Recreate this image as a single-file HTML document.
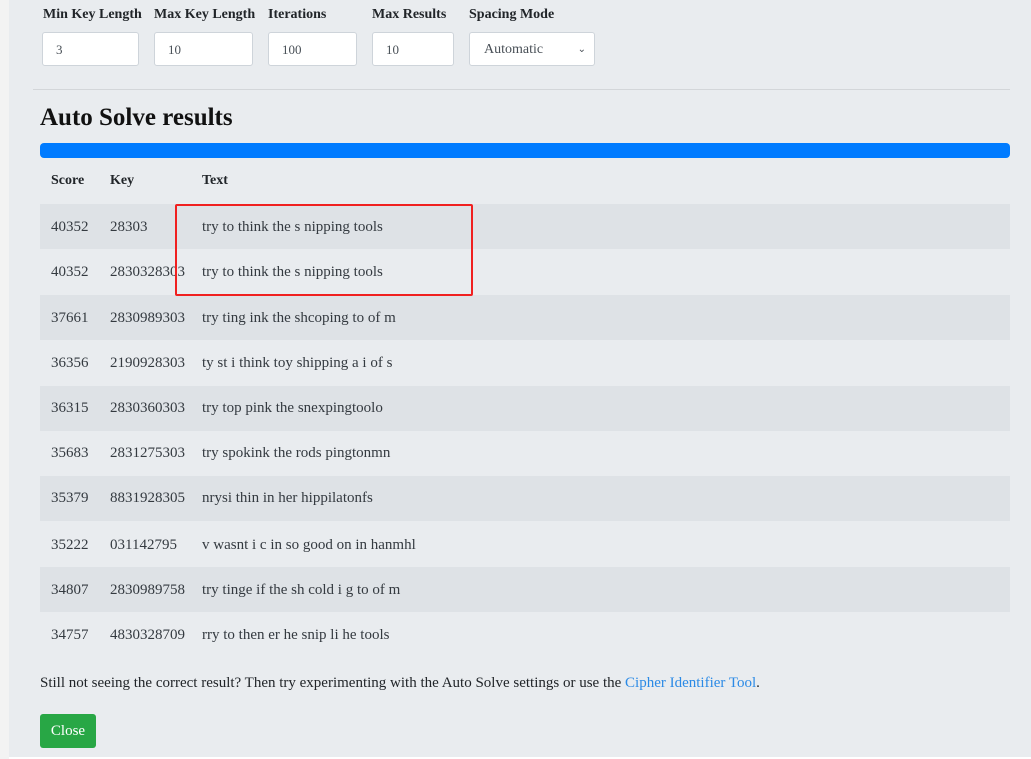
<!DOCTYPE html>
<html><head><style>
body{margin:0;width:1031px;height:759px;background:#fff;position:relative;overflow:hidden;font-family:"Liberation Serif",serif;color:#212529}
.a{position:absolute;white-space:nowrap}
#bg{position:absolute;left:0;top:0;width:1031px;height:757px;background:#e9ecef}
#strip{position:absolute;left:0;top:0;width:9px;height:759px;background:#f3f3f3}
.lbl{font-weight:bold;font-size:14px;top:7px}
.in{position:absolute;top:32px;height:34px;background:#fff;border:1px solid #ced4da;border-radius:3px;font-size:13px;color:#495057;line-height:34px;padding-left:13px;box-sizing:border-box}
.row{position:absolute;left:40px;width:970px;height:45px}
.s{background:#dee2e6}
.c{position:absolute;font-size:15px;color:#343a40;white-space:nowrap}
</style></head><body>
<div id="bg"></div><div id="strip"></div>
<div class="a lbl" style="left:43px">Min Key Length</div>
<div class="a lbl" style="left:154px">Max Key Length</div>
<div class="a lbl" style="left:268px">Iterations</div>
<div class="a lbl" style="left:372px">Max Results</div>
<div class="a lbl" style="left:469px">Spacing Mode</div>
<div class="in" style="left:42px;width:97px">3</div>
<div class="in" style="left:154px;width:99px">10</div>
<div class="in" style="left:268px;width:89px">100</div>
<div class="in" style="left:372px;width:82px">10</div>
<div class="in" style="left:469px;width:126px;font-size:14px;padding-left:14px">Automatic<span style="position:absolute;right:8px;font-size:10px">&#8964;</span></div>
<div class="a" style="left:33px;top:89px;width:977px;height:1px;background:#d3d6d9"></div>
<div class="a" style="left:40px;top:104px;font-size:25px;font-weight:bold;color:#111">Auto Solve results</div>
<div class="a" style="left:40px;top:143px;width:970px;height:15px;background:#007bff;border-radius:4px"></div>
<div class="a" style="left:51px;top:173px;font-size:14px;font-weight:bold">Score</div>
<div class="a" style="left:110px;top:173px;font-size:14px;font-weight:bold">Key</div>
<div class="a" style="left:202px;top:173px;font-size:14px;font-weight:bold">Text</div>
<div class="row s" style="top:204px"></div>
<div class="row s" style="top:295px"></div>
<div class="row s" style="top:386px"></div>
<div class="row s" style="top:476px"></div>
<div class="row s" style="top:567px"></div>
<div class="c" style="left:51px;top:219px">40352</div><div class="c" style="left:110px;top:219px">28303</div><div class="c" style="left:202px;top:219px">try to think the s nipping tools</div>
<div class="c" style="left:51px;top:264px">40352</div><div class="c" style="left:110px;top:264px">2830328303</div><div class="c" style="left:202px;top:264px">try to think the s nipping tools</div>
<div class="c" style="left:51px;top:310px">37661</div><div class="c" style="left:110px;top:310px">2830989303</div><div class="c" style="left:202px;top:310px">try ting ink the shcoping to of m</div>
<div class="c" style="left:51px;top:355px">36356</div><div class="c" style="left:110px;top:355px">2190928303</div><div class="c" style="left:202px;top:355px">ty st i think toy shipping a i of s</div>
<div class="c" style="left:51px;top:400px">36315</div><div class="c" style="left:110px;top:400px">2830360303</div><div class="c" style="left:202px;top:400px">try top pink the snexpingtoolo</div>
<div class="c" style="left:51px;top:445px">35683</div><div class="c" style="left:110px;top:445px">2831275303</div><div class="c" style="left:202px;top:445px">try spokink the rods pingtonmn</div>
<div class="c" style="left:51px;top:490px">35379</div><div class="c" style="left:110px;top:490px">8831928305</div><div class="c" style="left:202px;top:490px">nrysi thin in her hippilatonfs</div>
<div class="c" style="left:51px;top:537px">35222</div><div class="c" style="left:110px;top:537px">031142795</div><div class="c" style="left:202px;top:537px">v wasnt i c in so good on in hanmhl</div>
<div class="c" style="left:51px;top:582px">34807</div><div class="c" style="left:110px;top:582px">2830989758</div><div class="c" style="left:202px;top:582px">try tinge if the sh cold i g to of m</div>
<div class="c" style="left:51px;top:627px">34757</div><div class="c" style="left:110px;top:627px">4830328709</div><div class="c" style="left:202px;top:627px">rry to then er he snip li he tools</div>
<div class="a" style="left:175px;top:204px;width:294px;height:88px;border:2px solid #f02020;border-radius:2px"></div>
<div class="a" style="left:40px;top:675px;font-size:15px">Still not seeing the correct result? Then try experimenting with the Auto Solve settings or use the <span style="color:#2b8ae6">Cipher Identifier Tool</span>.</div>
<div class="a" style="left:40px;top:714px;width:56px;height:34px;background:#28a745;border-radius:3px;color:#fff;font-size:15px;line-height:34px;text-align:center">Close</div>
</body></html>
